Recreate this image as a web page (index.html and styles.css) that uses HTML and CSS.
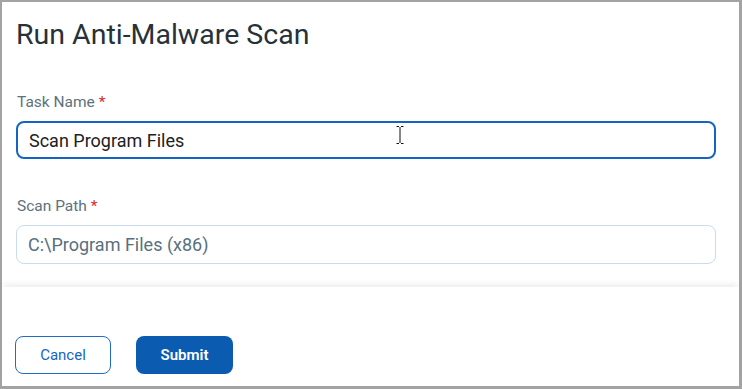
FILE: index.html
```
<!DOCTYPE html>
<html lang="en">
<head>
    <meta charset="UTF-8">
    <meta name="viewport" content="width=device-width, initial-scale=1.0">
    <title>Run Anti-Malware Scan</title>
    <link rel="stylesheet" href="styles.css">
</head>
<body>
    <div class="dialog">
        <div class="dialog-body">
            <h1 class="dialog-title">Run Anti-Malware Scan</h1>

            <!-- Task name -->
            <div class="form-group">
                <label for="taskName">Task Name <span class="req">*</span></label>
                <div class="input-wrap">
                    <input type="text" id="taskName" class="field field-active" value="Scan Program Files">
                    <svg class="ibeam" viewBox="0 0 8 18">
                        <path d="M0.5,0.5H3M5,0.5H7.5M4,1V17M0.5,17.5H3M5,17.5H7.5" />
                    </svg>
                </div>
            </div>

            <!-- Scan path -->
            <div class="form-group">
                <label for="scanPath">Scan Path <span class="req">*</span></label>
                <input type="text" id="scanPath" class="field field-readonly" value="C:\Program Files (x86)" readonly>
            </div>
        </div>

        <div class="dialog-footer">
            <button class="btn btn-outline">Cancel</button>
            <button class="btn btn-primary">Submit</button>
        </div>
    </div>
</body>
</html>
```

FILE: styles.css
```
* {
    margin: 0;
    padding: 0;
    box-sizing: border-box;
    font-family: 'Roboto', 'Liberation Sans', sans-serif;
}

html, body {
    height: 100%;
}

body {
    background: #fff;
}

.dialog {
    height: 100vh;
    display: flex;
    flex-direction: column;
    border: solid #a3a3a3;
    border-width: 2px 3px 3px 2px;
    background: #fff;
}

.dialog-body {
    flex: 1;
    padding: 17px 23px 0 14px;
}

.dialog-title {
    font-size: 28.5px;
    line-height: 32px;
    font-weight: 400;
    color: #263238;
    margin-bottom: 41px;
}

.form-group {
    display: flex;
    flex-direction: column;
    margin-bottom: 37px;
}

.form-group:last-child {
    margin-bottom: 0;
}

.form-group label {
    font-size: 15.5px;
    line-height: 20px;
    color: #5d717e;
    margin-bottom: 9px;
    margin-left: 1px;
}

.req {
    color: #e0291d;
}

.input-wrap {
    position: relative;
}

.field {
    width: 100%;
    height: 38px;
    border-radius: 8px;
    padding: 0 11px;
    font-size: 18px;
    background: #fff;
    outline: none;
}

.field-active {
    border: 2px solid #1565c0;
    color: #212121;
}

.field-readonly {
    border: 1px solid #c9dbee;
    padding-left: 11px;
    color: #58707d;
    height: 39px;
}

/* mouse cursor over the task name field */
.ibeam {
    position: absolute;
    left: 380px;
    top: 5px;
    width: 8px;
    height: 18px;
    fill: none;
    stroke: #111;
    stroke-width: 1;
}

.dialog-footer {
    flex: none;
    padding: 49px 0 12px 13px;
    display: flex;
    gap: 25px;
    box-shadow: 0 -5px 6px -2px rgba(0, 0, 0, 0.07);
    position: relative;
}

.btn {
    width: 96px;
    height: 38px;
    border-radius: 8px;
    font-size: 15px;
    cursor: pointer;
}

.btn-outline {
    background: #fff;
    color: #1565c0;
    border: 1px solid #1f6dc4;
}

.btn-primary {
    background: #0b5cb1;
    color: #fff;
    border: none;
    font-weight: 600;
    width: 97px;
}
```
